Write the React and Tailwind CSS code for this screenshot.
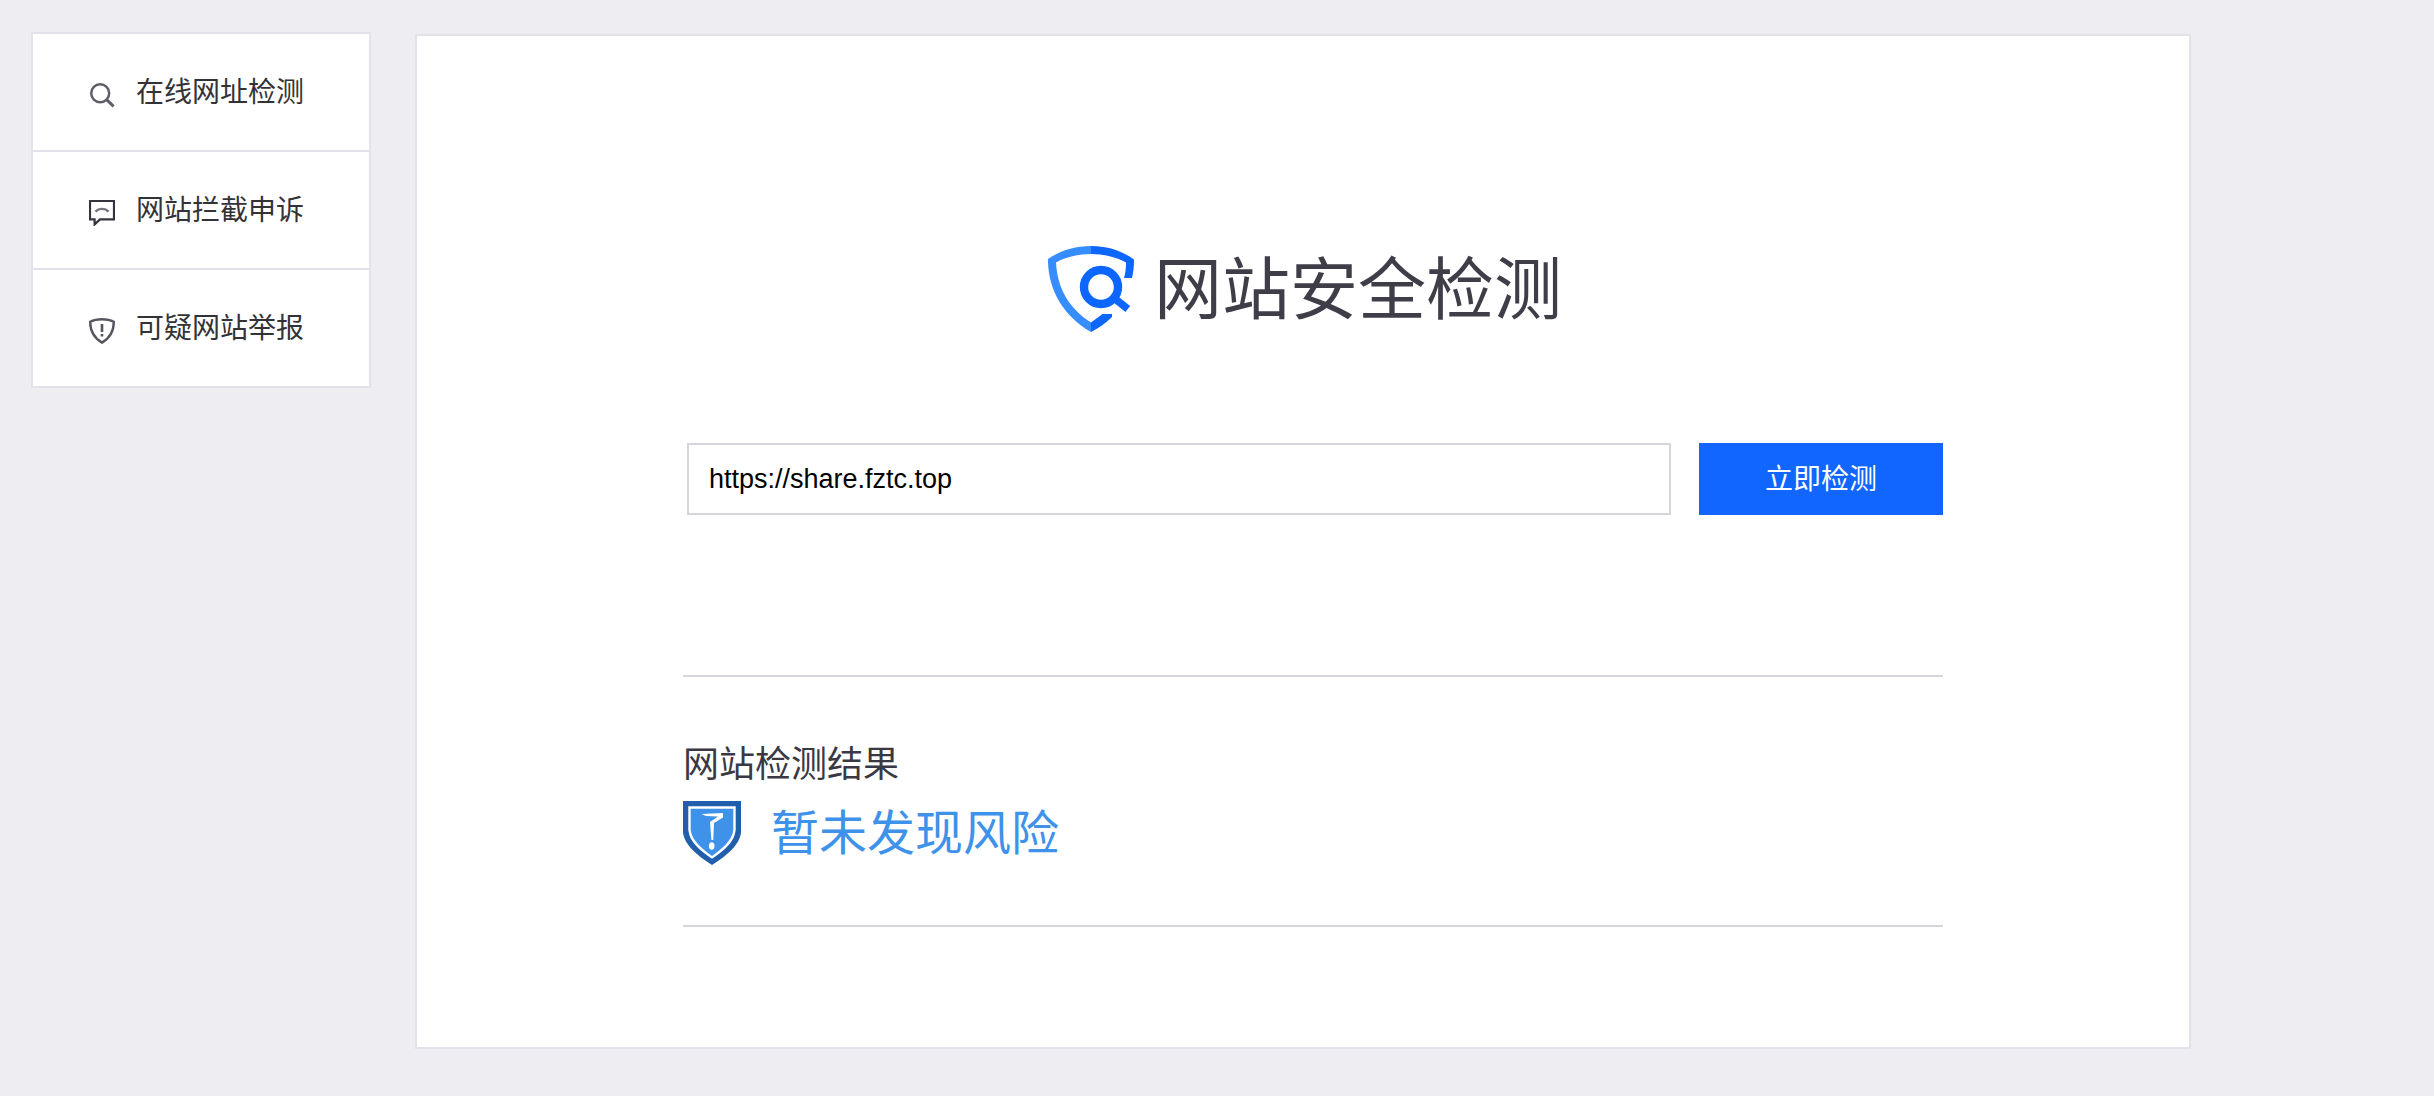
import React, { useState } from 'react';

const SearchIcon = () => (
  <svg className="w-[26px] h-[26px] mt-1.5 shrink-0" viewBox="0 0 26 26" fill="none" stroke="#5f5f6a" strokeWidth="2.5" aria-hidden="true">
    <circle cx="11.2" cy="11.2" r="9" />
    <path d="M17.8 17.8L24.6 24.4" strokeWidth="3" />
  </svg>
);

const AppealIcon = () => (
  <svg className="w-[26px] h-[26px] mt-1.5 shrink-0" viewBox="0 0 26 26" fill="none" aria-hidden="true">
    <path d="M1 1H25V19.4H11L5.6 24.4V19.4H1Z" stroke="#34343f" strokeWidth="2.2" />
    <path d="M6.5 11.6C10 8 16 8 19.5 11.6" stroke="#75757f" strokeWidth="2.4" />
  </svg>
);

const ReportIcon = () => (
  <svg className="w-[26px] h-[26px] mt-1.5 shrink-0" viewBox="0 0 26 26" fill="none" stroke="#565661" strokeWidth="2.4" aria-hidden="true">
    <path d="M13 1.2C17.5 1.2 21.5 2 24.8 3.8C24.8 13 21 20 13 24.6C5 20 1.2 13 1.2 3.8C4.5 2 8.5 1.2 13 1.2Z" />
    <path d="M13 6V14M13 16V18.4" strokeWidth="2.6" />
  </svg>
);

const LogoIcon = () => (
  <svg className="w-[86px] h-[86px] shrink-0" viewBox="0 0 86 86" aria-hidden="true">
    <path fill="#368dff" d="M43 0C26 0 12 5 0 13V16C1 46 16 70 43 86V76.6C21 62 9.5 43 8 16.5C18 11 30 8 43 8Z" />
    <path fill="#0c66ff" d="M43 0C60 0 74 5 86 13.5C86 20 85.5 26 84 32H76C77.5 27 78 22 78 16.5C68 11 56 8 43 8Z" />
    <path fill="#0c66ff" d="M43 76.6L54.5 68H64V71C58 77 51 82 43 86Z" />
    <circle cx="53" cy="41" r="17" fill="none" stroke="#0c66ff" strokeWidth="8.4" />
    <path d="M66 52L79.8 63" stroke="#0c66ff" strokeWidth="7.5" />
  </svg>
);

const ResultIcon = () => (
  <svg className="w-[58px] h-[64px] shrink-0" viewBox="0 0 58 64" aria-hidden="true">
    <path fill="#215fac" d="M0 0H58V31C57 44 43 55 29 64C15 55 1 44 0 31Z" />
    <path fill="#fff" d="M5.3 5.3H52.7V29C51.7 41 41 49.7 29 57.7C17 49.7 6.3 41 5.3 29Z" />
    <path fill="#3e92ea" d="M7.7 7.7H50.3V29C49.3 39.5 39 47.5 29 55C19 47.5 8.7 39.5 7.7 29Z" />
    <path fill="#fff" d="M18.5 13L40 12V16.5L31 22L30.3 39H28.4L27 21L35 15.5L23 15Z" />
    <ellipse cx="28.7" cy="45" rx="2.8" ry="3.8" fill="#fff" />
  </svg>
);

const menu = [
  { label: '在线网址检测', icon: SearchIcon },
  { label: '网站拦截申诉', icon: AppealIcon },
  { label: '可疑网站举报', icon: ReportIcon },
];

const App = () => {
  const [url, setUrl] = useState('https://share.fztc.top');

  return (
    <div className="min-h-screen bg-[#eeedf2] flex items-start gap-11 pt-8 pl-[31px] pr-[243px] pb-[47px] font-['Liberation_Sans','Noto_Sans_CJK_SC',sans-serif]">
      <nav className="w-[340px] shrink-0 bg-white border-2 border-[#e3e2ea] divide-y-2 divide-[#e3e2ea]">
        {menu.map(({ label, icon: Icon }) => (
          <a key={label} href="#" className="box-content flex items-center gap-[21px] h-[116px] pl-14 text-[28px] leading-10 text-[#333337]">
            <Icon />
            <span className="pt-0.5">{label}</span>
          </a>
        ))}
      </nav>

      <main className="flex-1 mt-0.5 bg-white border-2 border-[#e3e2ea] pt-[210px] pb-[120px] pl-[266px] pr-[246px]">
        <div className="flex items-center justify-center gap-5 pr-4">
          <LogoIcon />
          <h1 className="pt-0.5 text-[68px] leading-[84px] text-[#3f3e48]">网站安全检测</h1>
        </div>

        <form className="flex gap-7 mt-[111px] pl-1" onSubmit={(e) => e.preventDefault()}>
          <input
            type="text"
            aria-label="网址"
            value={url}
            onChange={(e) => setUrl(e.target.value)}
            className="flex-1 min-w-0 h-[72px] px-5 border-2 border-[#d5d5dc] bg-white text-[27px] text-black outline-none"
          />
          <button type="submit" className="w-[244px] h-[72px] pt-0.5 bg-[#1166ff] text-[28px] text-white">
            立即检测
          </button>
        </form>

        <section className="mt-[160px] pt-[62px] pb-[60px] border-y-2 border-[#d5d5da]">
          <h2 className="text-[36px] leading-[52px] text-[#3a3943]">网站检测结果</h2>
          <div className="flex items-center gap-[30px] mt-2.5">
            <ResultIcon />
            <p className="pt-0.5 text-[48px] leading-[62px] text-[#3e92ea]">暂未发现风险</p>
          </div>
        </section>
      </main>
    </div>
  );
};

export default App;
